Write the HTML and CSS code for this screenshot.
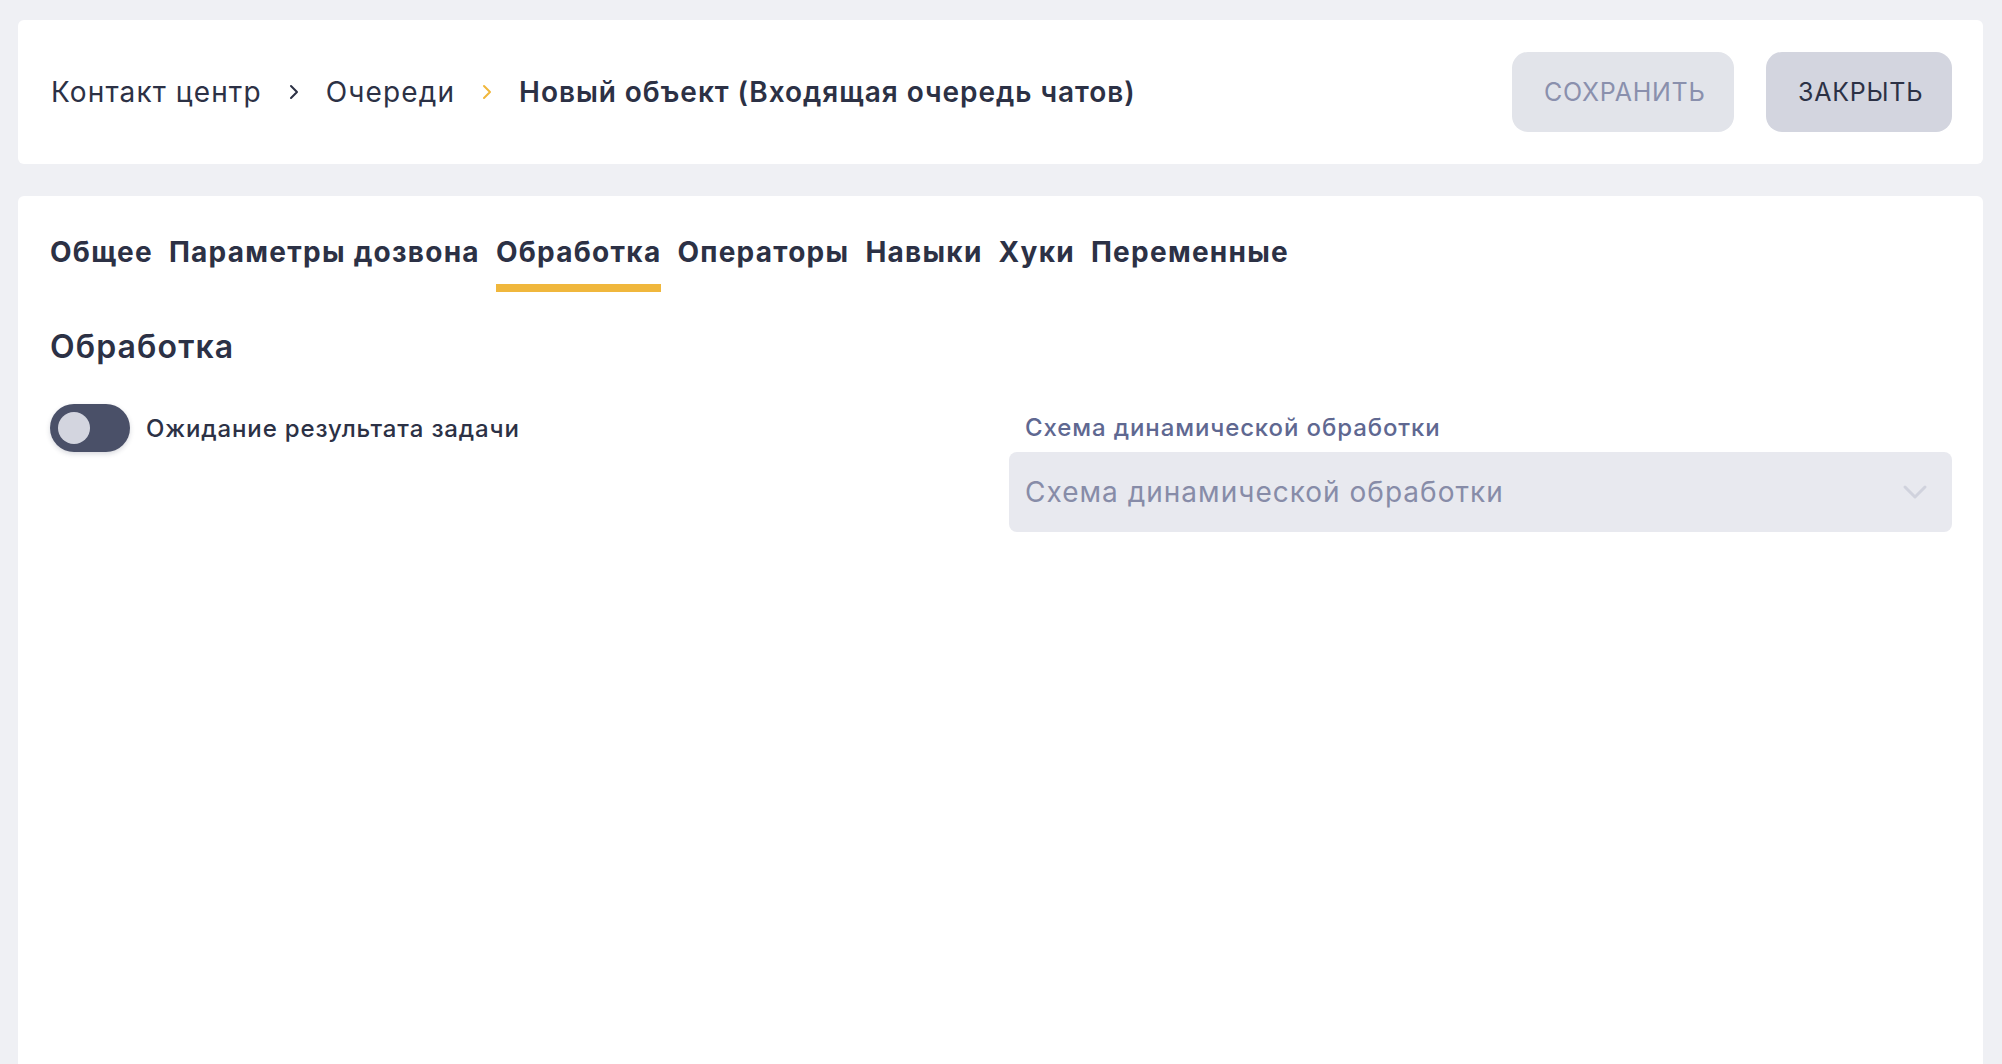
FILE: index.html
```html
<!DOCTYPE html>
<html>
<head>
    <title>Новый объект</title>
    <link rel="stylesheet" href="styles.css">
</head>
<body>
  <div class="card header">
      <div class="crumbs">
          <span class="crumb">Контакт центр</span>
          <svg class="sep" width="10" height="16" viewBox="0 0 10 16"><path d="M2 2l6 6-6 6" fill="none" stroke="#2c3145" stroke-width="2" stroke-linecap="round" stroke-linejoin="round"/></svg>
          <span class="crumb">Очереди</span>
          <svg class="sep" width="10" height="16" viewBox="0 0 10 16"><path d="M2 2l6 6-6 6" fill="none" stroke="#f0b73c" stroke-width="2" stroke-linecap="round" stroke-linejoin="round"/></svg>
          <span class="crumb current">Новый объект (Входящая очередь чатов)</span>
      </div>
      <div class="actions">
          <button class="button save">Сохранить</button>
          <button class="button close">Закрыть</button>
      </div>
  </div>
  <div class="card content">
      <div class="tabs">
          <span class="tab">Общее</span>
          <span class="tab">Параметры дозвона</span>
          <span class="tab active">Обработка</span>
          <span class="tab">Операторы</span>
          <span class="tab">Навыки</span>
          <span class="tab">Хуки</span>
          <span class="tab">Переменные</span>
      </div>
      <h2>Обработка</h2>
      <div class="form-grid">
          <div class="toggle-row">
              <span class="toggle"><span class="knob"></span></span>
              <span class="toggle-label">Ожидание результата задачи</span>
          </div>
          <div class="field">
              <label class="field-label">Схема динамической обработки</label>
              <div class="select">
                  <span class="placeholder">Схема динамической обработки</span>
                  <svg width="26" height="16" viewBox="0 0 26 16"><path d="M3 3l10 10 10-10" fill="none" stroke="#d0d2dd" stroke-width="3" stroke-linecap="round" stroke-linejoin="round"/></svg>
              </div>
          </div>
      </div>
  </div>
</body>
</html>
```

FILE: styles.css
```css
body {
    margin: 0;
    padding: 20px 19px 0 18px;
    background-color: #eff0f4;
    font-family: Inter, "Noto Sans", sans-serif;
    color: #2c3145;
    overflow: hidden;
}

.card {
    background-color: #fff;
    border-radius: 6px;
}

.header {
    height: 144px;
    box-sizing: border-box;
    padding: 0 31px 0 33px;
    display: flex;
    align-items: center;
    justify-content: space-between;
}

.crumbs {
    display: flex;
    align-items: center;
    font-size: 28px;
    letter-spacing: 0.04em;
}

.sep {
    margin: 0 27px 0 27px;
}

.current {
    font-weight: 600;
    letter-spacing: 0.034em;
}

.actions {
    display: flex;
    gap: 32px;
}

.button {
    height: 80px;
    padding: 0 32px;
    border: none;
    border-radius: 16px;
    font-family: inherit;
    font-size: 25px;
    letter-spacing: 0.03em;
    text-transform: uppercase;
}

.save {
    width: 222px;
    background-color: #e2e4ea;
    color: #8a90ad;
}

.close {
    width: 186px;
    background-color: #d3d5df;
    color: #2c3145;
}

.content {
    margin-top: 32px;
    min-height: 900px;
    border-radius: 6px 6px 0 0;
    padding: 40px 31px 0 32px;
}

.tabs {
    display: flex;
    gap: 16px;
}

.tab {
    font-size: 28px;
    font-weight: 700;
    line-height: 32px;
    letter-spacing: 0.045em;
    padding-bottom: 16px;
    border-bottom: 8px solid transparent;
}

.tab.active {
    border-bottom-color: #f0b73c;
}

h2 {
    margin: 37px 0 0;
    font-size: 32px;
    font-weight: 600;
    line-height: 36px;
    letter-spacing: 0.035em;
}

.form-grid {
    margin-top: 39px;
    display: grid;
    grid-template-columns: 1fr 1fr;
    gap: 16px;
}

.toggle-row {
    display: flex;
    align-items: center;
    gap: 16px;
    height: 48px;
}

.toggle {
    width: 80px;
    height: 48px;
    border-radius: 24px;
    background-color: #4a5068;
    box-shadow: 0 2px 5px rgba(40, 45, 70, 0.18);
    display: flex;
    align-items: center;
    padding-left: 8px;
    box-sizing: border-box;
}

.knob {
    width: 32px;
    height: 32px;
    border-radius: 50%;
    background-color: #d3d5df;
}

.toggle-label {
    font-size: 24px;
    font-weight: 500;
    letter-spacing: 0.036em;
}

.field-label {
    display: block;
    line-height: 48px;
    padding-left: 16px;
    font-size: 24px;
    font-weight: 500;
    color: #5f6891;
    letter-spacing: 0.037em;
}

.select {
    height: 80px;
    box-sizing: border-box;
    padding: 0 24px 0 16px;
    background-color: #e8e9ef;
    border-radius: 8px;
    display: flex;
    align-items: center;
    justify-content: space-between;
}

.placeholder {
    font-size: 28px;
    color: #878ca8;
    letter-spacing: 0.036em;
}
```
